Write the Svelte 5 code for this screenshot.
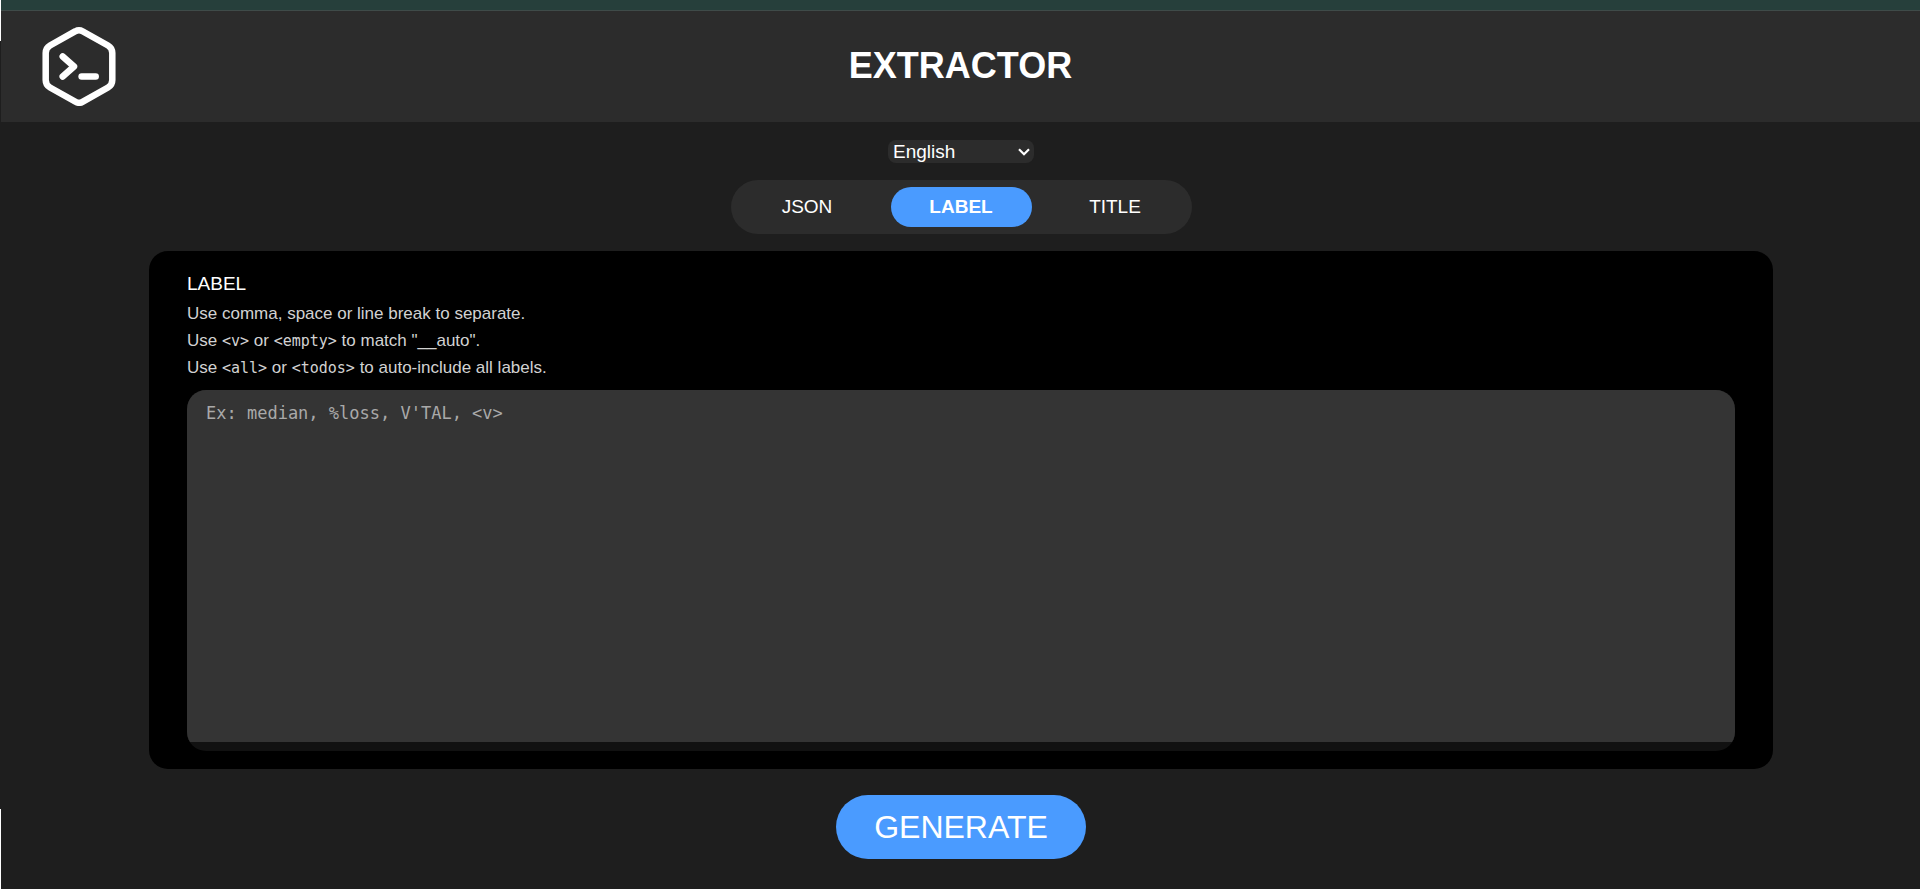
<script>
  const tabs = ['JSON', 'LABEL', 'TITLE'];
  let active = $state('LABEL');
  let language = $state('en');
  let labels = $state('');
</script>

<div class="page">
  <div class="strip"></div>
  <header>
    <svg class="logo" viewBox="0 0 80 80" role="img" aria-label="Extractor">
      <g fill="none" stroke="#fff" stroke-width="6.5" stroke-linecap="round" stroke-linejoin="round">
        <path d="M36.500 5.200Q40 3.200 43.500 5.200L69 19.500Q73.300 22 73.300 27V54Q73.300 59 69 61.500L43.500 75.800Q40 77.800 36.500 75.800L11 61.500Q6.700 59 6.700 54V27Q6.700 22 11 19.500Z" />
        <path d="M23.700 30.500L35 40.500L23.700 50.500" />
        <path d="M42.600 50.500H56.700" />
      </g>
    </svg>
    <h1>EXTRACTOR</h1>
  </header>

  <main>
    <div class="lang">
      <select aria-label="Language" bind:value={language}>
        <option value="en">English</option>
        <option value="pt">Português</option>
      </select>
      <svg viewBox="0 0 12 8" aria-hidden="true">
        <path d="M1 1.200L6 6.200L11 1.200" fill="none" stroke="#fff" stroke-width="2.200" />
      </svg>
    </div>

    <nav>
      {#each tabs as tab}
        <button class="tab" class:active={active === tab} onclick={() => (active = tab)}>{tab}</button>
      {/each}
    </nav>

    <section>
      <label for="labels">{active}</label>
      <p>Use comma, space or line break to separate.</p>
      <p>Use <code>&lt;v&gt;</code> or <code>&lt;empty&gt;</code> to match "__auto".</p>
      <p>Use <code>&lt;all&gt;</code> or <code>&lt;todos&gt;</code> to auto-include all labels.</p>
      <div class="field">
        <textarea id="labels" placeholder="Ex: median, %loss, V'TAL, <v>" bind:value={labels}></textarea>
      </div>
    </section>

    <button class="generate">GENERATE</button>
  </main>
</div>

<style>
  :global(body) {
    margin: 0;
    background: #1e1e1e;
  }
  .page {
    box-sizing: border-box;
    min-height: 100vh;
    display: flex;
    flex-direction: column;
    padding-left: 1px;
    background:
      linear-gradient(#fff, #fff) left top / 1px 41px no-repeat,
      linear-gradient(#fff, #fff) left bottom / 1px 80px no-repeat,
      #1e1e1e;
    color: #fff;
    font: 19px/22px "Liberation Sans", Arial, sans-serif;
  }
  .strip {
    height: 10px;
    background: #263f3b;
    border-bottom: 1px solid #3f4b49;
  }
  header {
    display: grid;
    grid-template-columns: 1fr auto 1fr;
    align-items: center;
    padding: 15px 38px 16px;
    background: #2c2c2c;
  }
  .logo {
    width: 80px;
    height: 80px;
  }
  h1 {
    margin: 0;
    font-size: 36px;
    line-height: 40px;
  }
  main {
    flex: 1;
    display: flex;
    flex-direction: column;
    align-items: center;
    gap: 17px;
    padding: 18px 147px 30px 148px;
  }
  .lang {
    display: grid;
    align-items: center;
  }
  .lang > * {
    grid-area: 1 / 1;
  }
  .lang svg {
    width: 12px;
    height: 8px;
    margin-right: 4px;
    justify-self: end;
    pointer-events: none;
  }
  select {
    appearance: none;
    width: 146px;
    height: 23px;
    padding: 0 20px 0 5px;
    border: 0;
    border-radius: 8px;
    background: #2c2c2c;
    color: #fff;
    font: inherit;
  }
  nav {
    display: grid;
    grid-template-columns: repeat(3, 141px);
    gap: 13px;
    padding: 7px 6px;
    border-radius: 27px;
    background: #2c2c2c;
  }
  button {
    border: 0;
    background: none;
    color: #fff;
    font: inherit;
    cursor: pointer;
  }
  .tab {
    height: 40px;
    padding: 0 0 1px;
    border-radius: 20px;
  }
  .active {
    background: #4a9bff;
    font-weight: bold;
  }
  section {
    box-sizing: border-box;
    width: 100%;
    flex: 1;
    display: flex;
    flex-direction: column;
    padding: 22px 38px 18px;
    border-radius: 19px;
    background: #000;
  }
  label {
    margin-bottom: 5px;
  }
  p {
    margin: 0;
    color: #d2d2d2;
    font-size: 17px;
    line-height: 27px;
  }
  code {
    font: 15px/20px "DejaVu Sans Mono", monospace;
  }
  .field {
    flex: 1;
    display: flex;
    margin-top: 9px;
    padding-bottom: 9px;
    border-radius: 19px;
    overflow: hidden;
    background: #111;
  }
  textarea {
    box-sizing: border-box;
    flex: 1;
    min-height: 200px;
    padding: 12px 19px;
    border: 0;
    outline: 0;
    resize: none;
    background: #343434;
    color: #fff;
    font: 17px/22px "DejaVu Sans Mono", monospace;
  }
  textarea::placeholder {
    color: #a9a9a9;
  }
  .generate {
    height: 64px;
    margin-top: 9px;
    padding: 0 38px;
    border-radius: 32px;
    background: #4a9bff;
    font-size: 32px;
    line-height: 36px;
  }
</style>
